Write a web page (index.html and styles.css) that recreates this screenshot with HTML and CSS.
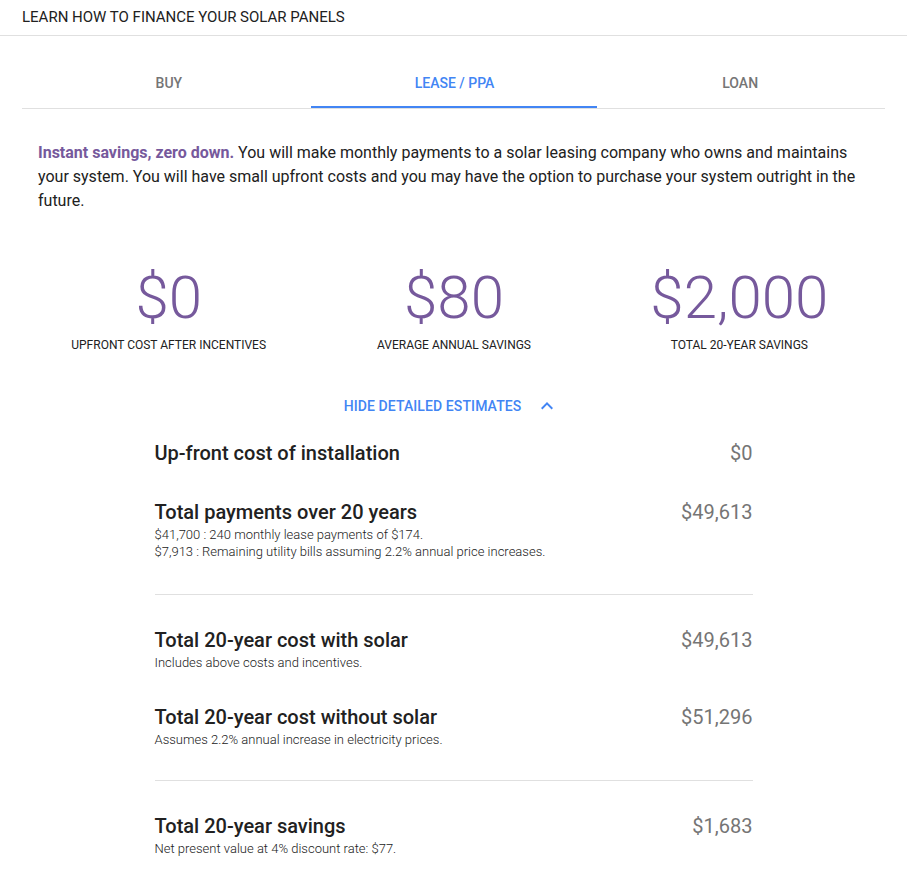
FILE: index.html
```html
<!DOCTYPE html>
<html>
<head>
<meta charset="utf-8">
<link rel="stylesheet" href="styles.css">
</head>
<body>
<div class="header">LEARN HOW TO FINANCE YOUR SOLAR PANELS</div>
<div class="tabs">
  <div class="tab">BUY</div>
  <div class="tab active">LEASE / PPA</div>
  <div class="tab">LOAN</div>
</div>
<p class="intro"><span class="lead">Instant savings, zero down.</span> You will make monthly payments to a solar leasing company who owns and maintains your system. You will have small upfront costs and you may have the option to purchase your system outright in the future.</p>
<div class="stats">
  <div class="stat"><div class="num">$0</div><div class="label">UPFRONT COST AFTER INCENTIVES</div></div>
  <div class="stat"><div class="num">$80</div><div class="label">AVERAGE ANNUAL SAVINGS</div></div>
  <div class="stat"><div class="num">$2,000</div><div class="label">TOTAL 20-YEAR SAVINGS</div></div>
</div>
<div class="toggle"><span>HIDE DETAILED ESTIMATES</span><svg class="chev" width="24" height="24" viewBox="0 0 24 24"><path d="M12 8l-6 6 1.41 1.41L12 10.83l4.59 4.58L18 14z" fill="#4285f4"/></svg></div>
<div class="details">
  <div class="group first">
    <div class="row"><div class="info"><div class="title">Up-front cost of installation</div></div><div class="val">$0</div></div>
    <div class="row"><div class="info"><div class="title">Total payments over 20 years</div><div class="sub">$41,700 : 240 monthly lease payments of $174.</div><div class="sub">$7,913 : Remaining utility bills assuming 2.2% annual price increases.</div></div><div class="val">$49,613</div></div>
  </div>
  <div class="group">
    <div class="row"><div class="info"><div class="title">Total 20-year cost with solar</div><div class="sub">Includes above costs and incentives.</div></div><div class="val">$49,613</div></div>
    <div class="row"><div class="info"><div class="title">Total 20-year cost without solar</div><div class="sub">Assumes 2.2% annual increase in electricity prices.</div></div><div class="val">$51,296</div></div>
  </div>
  <div class="group last">
    <div class="row"><div class="info"><div class="title">Total 20-year savings</div><div class="sub">Net present value at 4% discount rate: $77.</div></div><div class="val">$1,683</div></div>
  </div>
</div>
</body>
</html>
```
FILE: styles.css
```css
html, body { margin: 0; padding: 0; background: #fff; }
body { font-family: Roboto, "Noto Sans", sans-serif; color: #212121; }
.header {
  height: 35px; line-height: 35px; padding: 0 22px;
  font-size: 15px; font-weight: 400; color: #212121;
  border-bottom: 1px solid #e0e0e0;
}
.tabs {
  margin: 0 22px; display: grid; grid-template-columns: repeat(3, 1fr);
  border-bottom: 1px solid #e0e0e0;
}
.tab {
  position: relative; text-align: center;
  height: 72px; box-sizing: border-box; padding: 39px 0 0 6px;
  line-height: 16px; font-size: 14px; font-weight: 500; color: #757575;
}
.tab:last-child { padding-left: 0; padding-right: 2px; }
.tab.active { color: #4285f4; padding-left: 2px; }
.tab.active::after {
  content: ""; position: absolute; left: 1px; right: 0; bottom: 0; height: 2px; background: #4285f4;
}
.intro {
  margin: 32px 22px 0; padding: 0 16px;
  font-size: 16px; line-height: 24px; color: #212121;
}
.lead { font-weight: 700; color: #76599c; }
.stats {
  margin: 49px 25px 0 26px; display: grid; grid-template-columns: repeat(3, 1fr);
  text-align: center;
}
.num { font-size: 60px; font-weight: 300; line-height: 72px; color: #76599c; }
.label { font-size: 12px; line-height: 16px; margin-top: 3px; color: #212121; }
.toggle {
  margin-top: 41px; display: flex; justify-content: center; align-items: center;
  font-size: 14px; font-weight: 500; color: #4285f4; height: 24px;
  letter-spacing: 0.1px; padding-right: 4px;
}
.chev { margin-left: 14px; display: block; }
.details { width: 598px; margin: 21px auto 0; }
.group { padding: 31px 0 32px; border-bottom: 1px solid #e0e0e0; }
.group.first { padding-top: 0; padding-bottom: 34px; }
.group.last { border-bottom: none; }
.row { display: flex; justify-content: space-between; align-items: flex-start; }
.row + .row { margin-top: 32px; }
.first .row + .row { margin-top: 31px; }
.title { font-size: 20px; font-weight: 500; line-height: 28px; color: #212121; }
.sub { font-size: 13px; font-weight: 300; line-height: 17px; color: #212121; }
.sub:first-of-type { margin-top: 1px; }
.val { font-size: 20px; line-height: 28px; color: #757575; }
```
